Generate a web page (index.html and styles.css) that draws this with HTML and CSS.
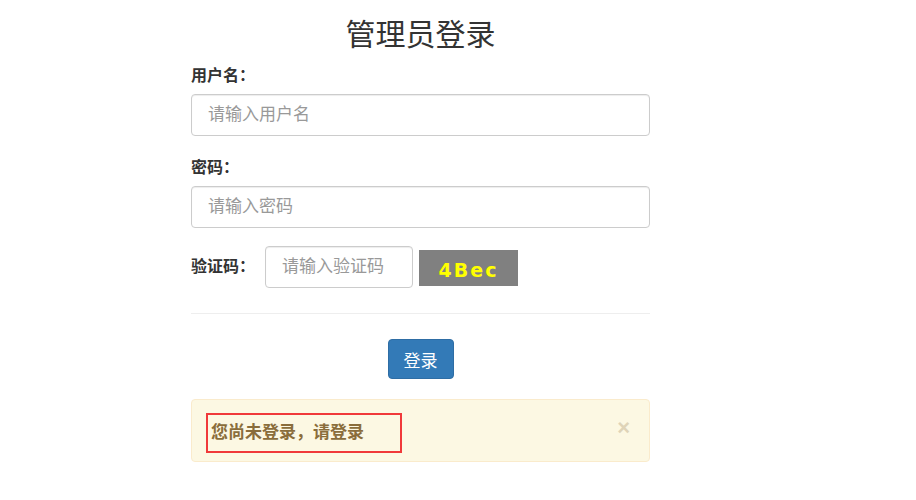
FILE: index.html
```html
<!DOCTYPE html>
<html>
<head>
    <meta charset="utf-8">
    <title>管理员登录</title>
    <link rel="stylesheet" href="styles.css">
</head>
<body>
    <div class="login-box">
        <h2 class="login-title">管理员登录</h2>
        <form class="login-form">
            <div class="form-group">
                <label class="form-label">用户名：</label>
                <input class="form-input" type="text" placeholder="请输入用户名">
            </div>
            <div class="form-group">
                <label class="form-label">密码：</label>
                <input class="form-input" type="password" placeholder="请输入密码">
            </div>
            <div class="captcha-row">
                <label class="form-label captcha-label">验证码：</label>
                <input class="form-input captcha-input" type="text" placeholder="请输入验证码">
                <div class="captcha-img">4Bec</div>
            </div>
            <hr class="divider">
            <div class="btn-row">
                <button class="btn-login" type="button">登录</button>
            </div>
        </form>
        <div class="alert-warning">
            <span class="alert-msg">您尚未登录，请登录</span>
            <button class="alert-close" type="button">×</button>
        </div>
    </div>
</body>
</html>
```

FILE: styles.css
```css
body {
    margin: 0;
    background: #fff;
    color: #333;
    font-family: "Liberation Sans", "Noto Sans CJK SC", sans-serif;
    font-size: 14px;
}
.login-box {
    width: 459px;
    margin-left: 191px;
}
.login-title {
    margin: 17px 0 0;
    font-size: 30px;
    font-weight: normal;
    line-height: 36px;
    text-align: center;
}
.login-form {
    margin-top: 13px;
}
.form-group {
    display: flex;
    flex-direction: column;
    margin-bottom: 22px;
}
.form-group + .form-group {
    margin-bottom: 18px;
}
.form-label {
    display: block;
    font-size: 16px;
    font-weight: bold;
    line-height: 20px;
    margin-bottom: 8px;
}
.form-input {
    box-sizing: border-box;
    width: 100%;
    height: 42px;
    padding: 0 16px;
    border: 1px solid #ccc;
    border-radius: 4px;
    box-shadow: inset 0 1px 1px rgba(0,0,0,0.075);
    font-family: inherit;
    font-size: 17px;
    color: #555;
    background: #fff;
}
.form-input::placeholder {
    color: #999;
}
.captcha-row {
    display: flex;
    align-items: center;
    height: 42px;
}
.captcha-label {
    margin: 0 10px 0 0;
}
.captcha-input {
    width: 148px;
}
.captcha-img {
    width: 99px;
    height: 36px;
    margin-left: 6px;
    margin-top: 2px;
    background: #808080;
    color: #ff0;
    font-family: "DejaVu Sans", sans-serif;
    font-weight: bold;
    font-size: 19px;
    letter-spacing: 2px;
    line-height: 40px;
    text-align: center;
}
.divider {
    margin: 25px 0 0;
    border: 0;
    border-top: 1px solid #eee;
}
.btn-row {
    display: flex;
    justify-content: center;
    margin-top: 25px;
}
.btn-login {
    height: 40px;
    padding: 0 15px;
    border: 1px solid #2e6da4;
    border-radius: 4px;
    background: #337ab7;
    color: #fff;
    font-family: inherit;
    font-size: 17px;
}
.alert-warning {
    position: relative;
    margin-top: 20px;
    padding: 13px 14px 8px;
    border: 1px solid #faebcc;
    border-radius: 4px;
    background: #fcf8e3;
    color: #8a6d3b;
}
.alert-msg {
    display: block;
    box-sizing: border-box;
    width: 196px;
    height: 40px;
    padding-left: 3px;
    border: 2px solid #f0393a;
    font-size: 17px;
    font-weight: bold;
    line-height: 36px;
}
.alert-close {
    position: absolute;
    top: 17px;
    right: 19px;
    padding: 0;
    border: 0;
    background: none;
    color: #8a6d3b;
    opacity: 0.25;
    font-family: "Liberation Sans", sans-serif;
    font-size: 22px;
    font-weight: bold;
    line-height: 1;
}
```
